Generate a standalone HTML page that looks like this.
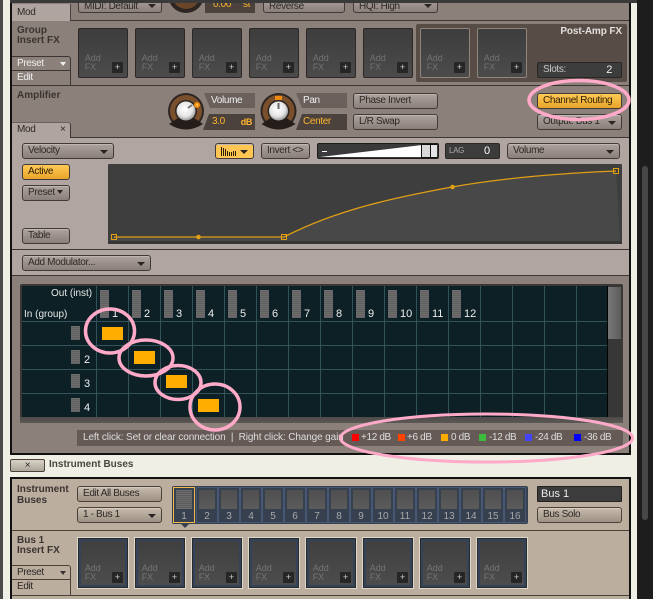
<!DOCTYPE html>
<html><head><meta charset="utf-8"><style>
html,body{margin:0;padding:0}
body{width:653px;height:599px;overflow:hidden;position:relative;background:#efefe5;font:10px/1 "Liberation Sans",sans-serif;letter-spacing:-.35px}
div{position:absolute;box-sizing:border-box;white-space:nowrap}
.b{border:1px solid #423a38;border-radius:3px;background:linear-gradient(#ada29e,#8a7f7b);color:#2c2725;padding-left:5px;height:16px;line-height:14px;box-shadow:inset 0 1px 0 #c0b6b2}
.t{background:linear-gradient(#c7bcae,#9d9184);color:#2c2725;border-color:#4a4238;box-shadow:inset 0 1px 0 #d5cbbf}
.o{background:linear-gradient(#ffca55,#e9a42a);color:#2a1d05;box-shadow:none}
.dn:after{content:"";position:absolute;right:5px;top:6px;border:4px solid transparent;border-top:4px solid #2a2523;border-bottom:0}
.f{width:50px;height:50px;top:28px;background:linear-gradient(#3d3d3d,#4b4b4b);border:1px solid #2d2826;border-radius:2px;color:#727272}
.f span,.g span{position:absolute;left:5.7px;top:25px;font-size:9px;line-height:9px;letter-spacing:0}
.f i,.g i{position:absolute;left:33px;top:33px;width:11px;height:11px;background:#262626;border-radius:1px;color:#ccc;font:normal 9px/11px "Liberation Sans",sans-serif;text-align:center;letter-spacing:0}
.p{border:1px solid #8f857b}
.g{top:538px;width:50px;height:50px;background:linear-gradient(#3f3f3f,#4d4d4d);border:1px solid #2a2a28;box-shadow:0 0 0 1px #ddd8cc,inset 0 0 0 2px #34435a;color:#757575}
.h{font-weight:bold;color:#3a3330;line-height:10px;letter-spacing:0}
.bar{width:9px;background:repeating-linear-gradient(#6d6d6d 0,#6d6d6d 1px,#616161 1px,#616161 2px)}
.n{color:#eee;font-size:11px;line-height:10px;letter-spacing:0}
.r{width:21px;height:13px;background:#ffae00}
.c{top:487px;width:22px;height:36px;border:1px solid #465873;background:#36404f;color:#a8a8a8;text-align:center;line-height:10px;letter-spacing:0}
.c b{position:absolute;left:2px;top:2px;width:16px;height:19px;background:linear-gradient(#4f4f4f,#5b5b5b);font-weight:normal}
.c span{position:absolute;left:0;right:0;top:24px}
.lab{background:#6b605c;color:#eee;height:15px;line-height:15px;text-align:left;padding-left:10px;clip-path:polygon(0 0,100% 0,100% 100%,6px 100%)}
.val{background:#4b413d;color:#ffb52e;height:16px;line-height:16px;padding-left:10px;clip-path:polygon(6px 0,100% 0,100% 100%,0 100%)}
.s{width:7px;height:7px;top:434px}
.st{top:433px;color:#ddd;line-height:10px}
</style></head><body>
<div style="left:0;top:0;width:3px;height:599px;background:#4b4b4b"></div>
<div style="left:10px;top:0;width:2px;height:455px;background:#111"></div>
<div style="left:629px;top:0;width:2px;height:455px;background:#111"></div>
<div style="left:637px;top:0;width:16px;height:599px;background:#1d1d1d"></div>
<div style="left:642px;top:166px;width:6px;height:354px;background:#474747;border-radius:3px"></div>

<div style="left:12px;top:0;width:617px;height:138px;background:#8c807b"></div>
<div style="left:12px;top:275px;width:617px;height:178px;background:#8c807b"></div>
<div style="left:12px;top:138px;width:617px;height:137px;background:#b0a5a1"></div>
<div style="left:12px;top:20px;width:617px;height:1px;background:#3d3634"></div>
<div style="left:12px;top:85px;width:617px;height:1px;background:#3d3634"></div>
<div style="left:12px;top:137px;width:617px;height:1px;background:#3d3634"></div>
<div style="left:12px;top:249px;width:617px;height:1px;background:#3d3634"></div>
<div style="left:12px;top:275px;width:617px;height:1px;background:#3d3634"></div>

<div style="left:12px;top:4px;width:59px;height:17px;background:#b0a4a0;border-right:1px solid #4a4240;padding:4px 0 0 5px;color:#2c2725">Mod</div>
<div class="b dn" style="left:78px;top:-3px;width:84px;padding-left:5px;line-height:18px">MIDI: Default</div>
<div class="b" style="left:263px;top:-3px;width:82px;line-height:18px">Reverse</div>
<div class="b dn" style="left:353px;top:-3px;width:85px;line-height:18px">HQI: High</div>
<div style="left:205px;top:0;width:50px;height:13px;background:#4b413d;color:#ffb52e;line-height:10px;padding-left:8px">0.00 <span style="position:absolute;left:38px">st</span></div>
<svg style="position:absolute;left:168px;top:0" width="37" height="13"><circle cx="18" cy="-5" r="18" fill="#2d2522"/><circle cx="18" cy="-5" r="14" fill="#6a4527"/></svg>
<div style="left:10px;top:0;width:627px;height:3px;background:#3a3a3a"></div>

<div class="h" style="left:17px;top:26px;color:#3a3330">Group<br>Insert FX</div>
<div style="left:12px;top:56px;width:59px;height:15px;border:1px solid #3d3634;border-left:0;border-radius:0 3px 0 0;background:#8c807b;color:#eee;padding-left:5px;line-height:14px">Preset<span style="position:absolute;left:48px;top:5px;border:3px solid transparent;border-top:4px solid #eee;border-bottom:0"></span></div>
<div style="left:12px;top:71px;width:59px;height:15px;border-right:1px solid #3d3634;color:#eee;padding-left:5px;line-height:14px">Edit</div>

<div class="f" style="left:78px"><span>Add<br>FX</span><i>+</i></div>
<div class="f" style="left:135px"><span>Add<br>FX</span><i>+</i></div>
<div class="f" style="left:192px"><span>Add<br>FX</span><i>+</i></div>
<div class="f" style="left:249px"><span>Add<br>FX</span><i>+</i></div>
<div class="f" style="left:306px"><span>Add<br>FX</span><i>+</i></div>
<div class="f" style="left:363px"><span>Add<br>FX</span><i>+</i></div>
<div style="left:416px;top:24px;width:211px;height:58px;background:#584c47;border-radius:2px"></div>
<div class="f p" style="left:420px"><span>Add<br>FX</span><i>+</i></div>
<div class="f p" style="left:477px"><span>Add<br>FX</span><i>+</i></div>
<div style="left:530px;top:27px;width:92px;text-align:right;font-weight:bold;color:#e4dfdc;line-height:10px;letter-spacing:-.1px">Post-Amp FX</div>
<div style="left:537px;top:62px;width:85px;height:16px;background:#3d3d3d;border:1px solid #2a2624;border-radius:2px;color:#c8c8c8;line-height:14px;padding-left:5px">Slots:<span style="position:absolute;right:9px;color:#eee;font-size:11px">2</span></div>

<div class="h" style="left:17px;top:91px">Amplifier</div>
<div style="left:12px;top:122px;width:59px;height:16px;background:#b0a4a0;border-right:1px solid #3d3634;border-top:1px solid #6b605c;border-radius:0 3px 0 0;color:#2c2725;padding-left:5px;line-height:14px">Mod<span style="position:absolute;left:48px;top:0">×</span></div>

<svg style="position:absolute;left:166px;top:91px" width="135" height="40">
<defs><radialGradient id="k" cx="45%" cy="40%" r="65%"><stop offset="0" stop-color="#fff"/><stop offset=".6" stop-color="#e6e6e6"/><stop offset="1" stop-color="#888"/></radialGradient></defs>
<circle cx="20" cy="20" r="18" fill="#2c2522"/>
<circle cx="20" cy="20" r="13.500" fill="none" stroke="#7a4f2c" stroke-width="5"/>
<path d="M12 27L3 33Q20 44 37 33L28 27Z" fill="#241d1a"/>
<circle cx="31" cy="14" r="3" fill="#f08a10"/><circle cx="31" cy="14" r="1.500" fill="#ffb63a"/>
<circle cx="20" cy="20" r="9.500" fill="url(#k)"/><path d="M22 17L26 14" stroke="#777" stroke-width="2"/>
<circle cx="112.500" cy="20" r="18" fill="#2c2522"/>
<circle cx="112.500" cy="20" r="13.500" fill="none" stroke="#7a4f2c" stroke-width="5"/>
<path d="M104.500 27L95.500 33Q112.500 44 129.500 33L120.500 27Z" fill="#241d1a"/>
<rect x="109" y="5" width="7" height="4" fill="#f08a10"/>
<circle cx="112.500" cy="20" r="9.500" fill="url(#k)"/><path d="M112.500 12V18" stroke="#666" stroke-width="2"/>
</svg>
<div class="lab" style="left:204px;top:93px;width:51px;padding-left:7px">Volume</div>
<div class="val" style="left:203px;top:114px;width:52px;padding-left:9px">3.0<span style="position:absolute;right:3px;font-size:9px;font-weight:bold">dB</span></div>
<div class="lab" style="left:296px;top:93px;width:51px;padding-left:7px">Pan</div>
<div class="val" style="left:296px;top:114px;width:51px;padding-left:7px">Center</div>
<div class="b" style="left:353px;top:93px;width:85px">Phase Invert</div>
<div class="b" style="left:353px;top:114px;width:85px">L/R Swap</div>
<div class="b o" style="left:537px;top:93px;width:85px">Channel Routing</div>
<div class="b dn" style="left:537px;top:114px;width:85px">Output: Bus 1</div>

<div class="b dn" style="left:22px;top:143px;width:92px">Velocity</div>
<div class="b o" style="left:22px;top:164px;width:48px">Active</div>
<div class="b" style="left:22px;top:185px;width:48px">Preset <span style="display:inline-block;border:3px solid transparent;border-top:4px solid #2a2523;border-bottom:0;vertical-align:1px"></span></div>
<div class="b" style="left:22px;top:228px;width:48px">Table</div>
<div class="b dn" style="left:215px;top:143px;width:39px;background:#ffc654"><svg style="position:absolute;left:4px;top:2px" width="18" height="11"><path d="M1.500 1V10M3.500 2V10M5.500 3V10M7.500 5V10M9.500 6V10M11.500 6V10M13.500 5V10M15.500 5V10" stroke="#2a1d05"/></svg></div>
<div class="b" style="left:261px;top:143px;width:49px">Invert &lt;&gt;</div>
<div style="left:317px;top:143px;width:122px;height:16px;background:#3a3a3a;border:1px solid #1c1c1c;border-radius:2px;overflow:hidden"><svg width="120" height="14" style="position:absolute;left:0;top:0"><path d="M2 13L104 1V13Z" fill="#fff"/><rect x="4" y="7" width="5" height="1" fill="#fff"/><rect x="103" y="0" width="16" height="14" fill="#111"/><rect x="104" y="1" width="8" height="12" fill="#d8d8d8"/><rect x="113" y="1" width="6" height="12" fill="#e4e4e4"/></svg></div>
<div style="left:445px;top:143px;width:55px;height:16px;background:#3c3c3c;border:1px solid #2a2624;border-radius:2px;color:#aaa;font-size:8px;line-height:14px;padding-left:3px">LAG<span style="position:absolute;left:38px;color:#fff;font-size:11px">0</span></div>
<div class="b dn" style="left:507px;top:143px;width:113px">Volume</div>
<svg style="position:absolute;left:108px;top:164px" width="514" height="80">
<rect width="514" height="80" rx="1" fill="#3e3e3e"/>
<path d="M176 73C230 45 290 33 344 23C400 13 460 9 508 7L512 78H2V73Z" fill="#484848"/>
<rect y="77" width="514" height="3" fill="#363636"/>
<path d="M6 73H176C230 45 290 33 344 23C400 13 460 9 508 7" fill="none" stroke="#e09f14" stroke-width="1.300"/>
<rect x="3.500" y="70.500" width="5" height="5" fill="none" stroke="#e09f14"/><rect x="173.500" y="70.500" width="5" height="5" fill="none" stroke="#e09f14"/><rect x="505.500" y="4.500" width="5" height="5" fill="none" stroke="#e09f14"/>
<circle cx="90.500" cy="73" r="2.300" fill="#e09f14"/><circle cx="344.500" cy="23" r="2.300" fill="#e09f14"/>
</svg>
<div class="b dn" style="left:22px;top:255px;width:129px">Add Modulator...</div>

<div style="left:20px;top:284px;width:603px;height:139px;background:#3a3735;border-radius:2px"></div>
<div style="left:22px;top:286px;width:585px;height:131px;background:#0d2026"></div>
<svg style="position:absolute;left:22px;top:286px" width="585" height="131"><path d="M74.500 0V131M106.500 0V131M138.500 0V131M170.500 0V131M202.500 0V131M234.500 0V131M266.500 0V131M298.500 0V131M330.500 0V131M362.500 0V131M394.500 0V131M426.500 0V131M458.500 0V131M490.500 0V131M522.500 0V131M554.500 0V131M0 35.500H585M0 59.500H585M0 83.500H585M0 107.500H585" stroke="#33525a" fill="none"/></svg>
<div style="left:607px;top:286px;width:14px;height:131px;background:#373737;border-left:1px solid #000"></div>
<div style="left:608px;top:287px;width:13px;height:52px;background:linear-gradient(90deg,#777,#5c5c5c)"></div>
<div style="left:20px;top:417px;width:603px;height:6px;background:linear-gradient(#4d4a48,#5c5856)"></div>
<div class="n" style="left:51px;top:289px;color:#e8e8e8;font-size:10px">Out (inst)</div>
<div class="n" style="left:24px;top:310px;color:#e8e8e8;font-size:10px">In (group)</div>

<div class="bar" style="left:100px;top:290px;height:28px"></div><div class="n" style="left:112px;top:309px">1</div>
<div class="bar" style="left:132px;top:290px;height:28px"></div><div class="n" style="left:144px;top:309px">2</div>
<div class="bar" style="left:164px;top:290px;height:28px"></div><div class="n" style="left:176px;top:309px">3</div>
<div class="bar" style="left:196px;top:290px;height:28px"></div><div class="n" style="left:208px;top:309px">4</div>
<div class="bar" style="left:228px;top:290px;height:28px"></div><div class="n" style="left:240px;top:309px">5</div>
<div class="bar" style="left:260px;top:290px;height:28px"></div><div class="n" style="left:272px;top:309px">6</div>
<div class="bar" style="left:292px;top:290px;height:28px"></div><div class="n" style="left:304px;top:309px">7</div>
<div class="bar" style="left:324px;top:290px;height:28px"></div><div class="n" style="left:336px;top:309px">8</div>
<div class="bar" style="left:356px;top:290px;height:28px"></div><div class="n" style="left:368px;top:309px">9</div>
<div class="bar" style="left:388px;top:290px;height:28px"></div><div class="n" style="left:400px;top:309px">10</div>
<div class="bar" style="left:420px;top:290px;height:28px"></div><div class="n" style="left:432px;top:309px">11</div>
<div class="bar" style="left:452px;top:290px;height:28px"></div><div class="n" style="left:464px;top:309px">12</div>

<div class="bar" style="left:71px;top:326px;height:14px"></div>
<div class="bar" style="left:71px;top:350px;height:14px"></div><div class="n" style="left:84px;top:355px">2</div>
<div class="bar" style="left:71px;top:374px;height:14px"></div><div class="n" style="left:84px;top:379px">3</div>
<div class="bar" style="left:71px;top:398px;height:14px"></div><div class="n" style="left:84px;top:403px">4</div>
<div class="r" style="left:102px;top:327px"></div>
<div class="r" style="left:134px;top:351px"></div>
<div class="r" style="left:166px;top:375px"></div>
<div class="r" style="left:198px;top:399px"></div>

<div style="left:77px;top:430px;width:546px;height:16px;background:#655a56"></div>
<div class="st" style="left:83px;letter-spacing:-.12px">Left click: Set or clear connection&nbsp; |&nbsp; Right click: Change gain</div>
<div class="s" style="left:352px;background:#f00"></div><div class="st" style="left:361px">+12 dB</div>
<div class="s" style="left:398px;background:#ff4400"></div><div class="st" style="left:407px">+6 dB</div>
<div class="s" style="left:441px;background:#ffae00"></div><div class="st" style="left:451px">0 dB</div>
<div class="s" style="left:479px;background:#3cbb3c"></div><div class="st" style="left:489px">-12 dB</div>
<div class="s" style="left:525px;background:#4444ff"></div><div class="st" style="left:535px">-24 dB</div>
<div class="s" style="left:574px;background:#0000ff"></div><div class="st" style="left:584px">-36 dB</div>
<div style="left:10px;top:453px;width:621px;height:2px;background:#111"></div>

<div class="b t" style="left:10px;top:459px;width:35px;height:13px;line-height:11px;padding:0;text-align:center;border-radius:2px;background:linear-gradient(#d8d4c8,#aaa69a)">×</div>
<div class="h" style="left:49px;top:460px;color:#4a4540">Instrument Buses</div>

<div style="left:10px;top:477px;width:621px;height:122px;background:#bcae9f;border:2px solid #111;border-bottom:0"></div>
<div style="left:12px;top:530px;width:617px;height:1px;background:#4a4238"></div>
<div style="left:12px;top:595px;width:617px;height:1px;background:#4a4238"></div>
<div class="h" style="left:17px;top:484px;line-height:11px;color:#3a3330">Instrument<br>Buses</div>
<div class="b t" style="left:77px;top:486px;width:85px">Edit All Buses</div>
<div class="b t dn" style="left:77px;top:507px;width:85px">1 - Bus 1</div>
<div style="left:172px;top:486px;width:356px;height:38px;background:#36404f;border-radius:2px"></div>
<div class="c" style="left:173px;border-color:#f0b94a"><b style="background:repeating-linear-gradient(#6c6c6c 0,#6c6c6c 1px,#5c5c5c 1px,#5c5c5c 2px)"></b><span>1</span></div>
<div class="c" style="left:196px"><b></b><span>2</span></div>
<div class="c" style="left:218px"><b></b><span>3</span></div>
<div class="c" style="left:240px"><b></b><span>4</span></div>
<div class="c" style="left:262px"><b></b><span>5</span></div>
<div class="c" style="left:284px"><b></b><span>6</span></div>
<div class="c" style="left:306px"><b></b><span>7</span></div>
<div class="c" style="left:328px"><b></b><span>8</span></div>
<div class="c" style="left:350px"><b></b><span>9</span></div>
<div class="c" style="left:372px"><b></b><span>10</span></div>
<div class="c" style="left:394px"><b></b><span>11</span></div>
<div class="c" style="left:416px"><b></b><span>12</span></div>
<div class="c" style="left:438px"><b></b><span>13</span></div>
<div class="c" style="left:460px"><b></b><span>14</span></div>
<div class="c" style="left:482px"><b></b><span>15</span></div>
<div class="c" style="left:504px"><b></b><span>16</span></div>
<div style="left:181px;top:524px;border:4px solid transparent;border-top:4px solid #36404f;border-bottom:0"></div>
<div style="left:537px;top:486px;width:85px;height:16px;background:#3c3c3c;border:1px solid #26221f;border-radius:1px;color:#eee;line-height:14px;padding-left:3px;font-size:11px;letter-spacing:0">Bus 1</div>
<div class="b t" style="left:537px;top:507px;width:85px">Bus Solo</div>

<div class="h" style="left:17px;top:536px;color:#3a3330">Bus 1<br>Insert FX</div>
<div style="left:12px;top:565px;width:59px;height:15px;border:1px solid #4a4238;border-left:0;border-radius:0 3px 0 0;color:#2c2725;padding-left:5px;line-height:14px">Preset<span style="position:absolute;left:48px;top:5px;border:3px solid transparent;border-top:4px solid #3a3330;border-bottom:0"></span></div>
<div style="left:12px;top:580px;width:59px;height:15px;border-right:1px solid #4a4238;color:#2c2725;padding-left:5px;line-height:14px">Edit</div>

<div class="g" style="left:78px"><span>Add<br>FX</span><i>+</i></div>
<div class="g" style="left:135px"><span>Add<br>FX</span><i>+</i></div>
<div class="g" style="left:192px"><span>Add<br>FX</span><i>+</i></div>
<div class="g" style="left:249px"><span>Add<br>FX</span><i>+</i></div>
<div class="g" style="left:306px"><span>Add<br>FX</span><i>+</i></div>
<div class="g" style="left:363px"><span>Add<br>FX</span><i>+</i></div>
<div class="g" style="left:420px"><span>Add<br>FX</span><i>+</i></div>
<div class="g" style="left:477px"><span>Add<br>FX</span><i>+</i></div>

<svg style="position:absolute;left:0;top:0" width="653" height="599" fill="none" stroke="#ffaac8" stroke-width="3.500">
<ellipse cx="579" cy="100" rx="50" ry="19.500"/>
<ellipse cx="110" cy="331" rx="24.500" ry="22"/>
<ellipse cx="146" cy="358" rx="27" ry="18"/>
<ellipse cx="178" cy="382.500" rx="23" ry="17"/>
<ellipse cx="215" cy="407" rx="25" ry="23"/>
<ellipse cx="486.500" cy="438" rx="146" ry="24" stroke-width="3"/>
</svg>
</body></html>
